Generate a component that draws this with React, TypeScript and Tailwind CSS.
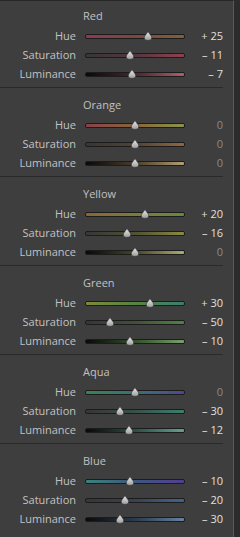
import React from 'react'

interface Slider {
  label: string
  value: number
  track: string
}

interface Group {
  name: string
  sliders: Slider[]
}

const groups: Group[] = [
  {
    name: 'Red',
    sliders: [
      { label: 'Hue', value: 25, track: 'from-[#8a3a54] via-[#7c4640] to-[#7c6238]' },
      { label: 'Saturation', value: -11, track: 'from-[#363636] via-[#523640] to-[#92404e]' },
      { label: 'Luminance', value: -7, track: 'from-[#0a0a0a] via-[#4a262e] to-[#b0606c]' },
    ],
  },
  {
    name: 'Orange',
    sliders: [
      { label: 'Hue', value: 0, track: 'from-[#8a4048] via-[#86643a] to-[#8a944a]' },
      { label: 'Saturation', value: 0, track: 'from-[#363636] via-[#504234] to-[#92683e]' },
      { label: 'Luminance', value: 0, track: 'from-[#0a0a0a] via-[#4a3e2a] to-[#b49e74]' },
    ],
  },
  {
    name: 'Yellow',
    sliders: [
      { label: 'Hue', value: 20, track: 'from-[#8a6438] via-[#7c7c3a] to-[#628a3e]' },
      { label: 'Saturation', value: -16, track: 'from-[#363636] via-[#505034] to-[#8a8c3e]' },
      { label: 'Luminance', value: 0, track: 'from-[#0a0a0a] via-[#464628] to-[#acac76]' },
    ],
  },
  {
    name: 'Green',
    sliders: [
      { label: 'Hue', value: 30, track: 'from-[#7c8a3a] via-[#548440] to-[#387e72]' },
      { label: 'Saturation', value: -50, track: 'from-[#363636] via-[#405038] to-[#4c8444]' },
      { label: 'Luminance', value: -10, track: 'from-[#0a0a0a] via-[#34502c] to-[#76a268]' },
    ],
  },
  {
    name: 'Aqua',
    sliders: [
      { label: 'Hue', value: 0, track: 'from-[#3a8250] via-[#387078] to-[#4e468e]' },
      { label: 'Saturation', value: -30, track: 'from-[#363636] via-[#38504a] to-[#3c806e]' },
      { label: 'Luminance', value: -12, track: 'from-[#0a0a0a] via-[#2a5048] to-[#68a092]' },
    ],
  },
  {
    name: 'Blue',
    sliders: [
      { label: 'Hue', value: -10, track: 'from-[#3a827c] via-[#3c567e] to-[#523c92]' },
      { label: 'Saturation', value: -20, track: 'from-[#363636] via-[#384250] to-[#44628c]' },
      { label: 'Luminance', value: -30, track: 'from-[#0a0a0a] via-[#2a3c4e] to-[#6884a2]' },
    ],
  },
]

const formatValue = (v: number): string => {
  if (v > 0) return `+ ${v}`
  if (v < 0) return `\u2013 ${Math.abs(v)}`
  return '0'
}

function Thumb() {
  return (
    <svg width="10" height="10" viewBox="0 0 10 10">
      <defs>
        <linearGradient id="thumbGrad" x1="0" y1="0" x2="0" y2="1">
          <stop offset="0" stopColor="#eeeeee" />
          <stop offset="1" stopColor="#9a9a9a" />
        </linearGradient>
      </defs>
      <path
        d="M5 0.5 C5.6 1.5 6.6 3 7.8 4.4 C9.4 6.2 9 9.4 5 9.4 C1 9.4 0.6 6.2 2.2 4.4 C3.4 3 4.4 1.5 5 0.5 Z"
        fill="url(#thumbGrad)"
        stroke="#2a2a2a"
        strokeWidth="0.6"
      />
    </svg>
  )
}

function SliderRow({ slider }: { slider: Slider }) {
  const pos = ((slider.value + 100) / 200) * 100
  return (
    <div className="flex h-[19px] items-center">
      <div className="w-[76px] text-right text-[#c2c2c2]">{slider.label}</div>
      <div className="relative ml-[9px] h-[19px] w-[100px]">
        <div className="absolute left-0 right-0 top-[8px] h-[5px] rounded-[2px] border border-[#1c1c1c] bg-[#1c1c1c]">
          <div className={`h-full w-full rounded-[1px] bg-linear-to-r ${slider.track}`} />
        </div>
        <div className="absolute top-[5px] -translate-x-1/2" style={{ left: `${pos}px` }}>
          <Thumb />
        </div>
      </div>
      <div
        className={`flex-1 text-right ${slider.value === 0 ? 'text-[#8a8a8a]' : 'text-[#e0e0e0]'}`}
      >
        {formatValue(slider.value)}
      </div>
    </div>
  )
}

export default function App() {
  return (
    <div className="flex h-[537px] w-[240px] bg-[#2c2c2c] text-[11px] leading-[14px] font-['Open_Sans',sans-serif]">
      <div className="h-full w-[234px] border-r border-t border-r-[#5a5a5a] border-t-[#262626] bg-[#3e3e3e] pr-[10px]">
        {groups.map((g, i) => (
          <div
            key={g.name}
            className={`border-b border-[#2a2a2a] ${i === 0 ? 'pt-[8px]' : 'pt-[10px]'} ${i === groups.length - 1 ? 'border-b-0' : ''} ${i === groups.length - 1 ? 'pb-[5px]' : 'pb-[4px]'}`}
          >
            <div className="h-[14px] pl-[83px] text-[#c0c0c0]">{g.name}</div>
            <div className="mt-[3px]">
              {g.sliders.map((s) => (
                <SliderRow key={s.label} slider={s} />
              ))}
            </div>
          </div>
        ))}
      </div>
    </div>
  )
}
